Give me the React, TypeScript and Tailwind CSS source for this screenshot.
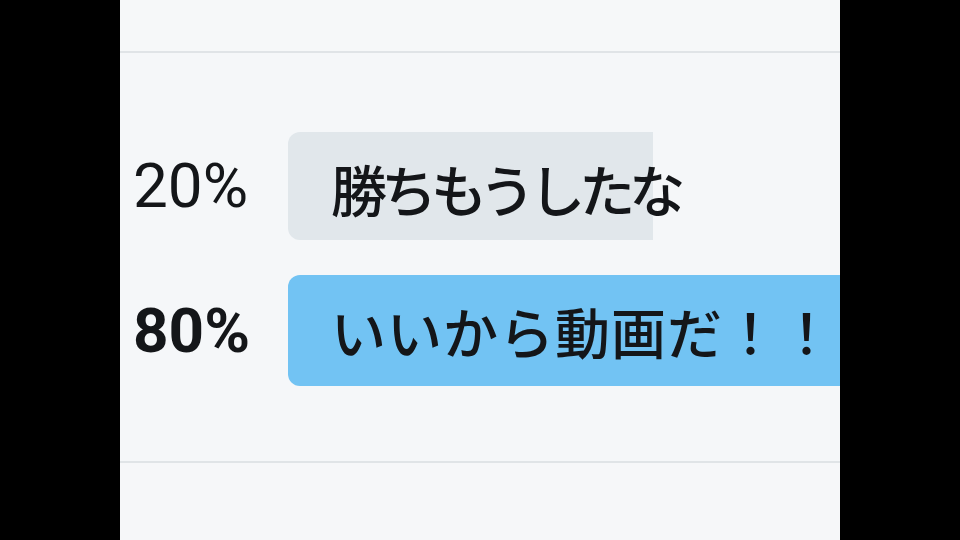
import React from "react";

export default function App() {
  return (
    <div className="w-[960px] h-[540px] bg-black flex justify-center overflow-hidden">
      <div className="w-[720px] h-[540px] flex flex-col bg-[#f5f7f9] overflow-hidden">
        <div className="h-[51px] shrink-0 bg-[#f6f8f9]" />
        <div className="h-[2px] shrink-0 bg-[#e0e4e7]" />
        <div className="h-[408px] shrink-0 flex flex-col pt-[79px] gap-[35px]">
          <div className="flex items-center h-[108px]">
            <div
              className="w-[168px] shrink-0 pl-[13px] text-[62px] text-[#141619] leading-none"
              style={{ fontFamily: "Roboto, 'Noto Sans', sans-serif" }}
            >
              20%
            </div>
            <div className="h-[108px] w-[365px] shrink-0 bg-[#e1e7eb] rounded-l-[12px] flex items-center pl-[43px]">
              <span
                className="text-[56px] font-medium leading-none tracking-[-6px] text-[#141619] whitespace-nowrap pt-[4px]"
                style={{ fontFamily: "'Noto Sans CJK JP', sans-serif" }}
              >
                勝ちもうしたな
              </span>
            </div>
          </div>
          <div className="flex items-center h-[111px]">
            <div
              className="w-[168px] shrink-0 pl-[13px] text-[62px] font-bold text-[#141619] leading-none"
              style={{ fontFamily: "Roboto, 'Noto Sans', sans-serif" }}
            >
              80%
            </div>
            <div className="h-[111px] w-[620px] shrink-0 bg-[#72c3f3] rounded-l-[12px] flex items-center pl-[43px]">
              <span
                className="text-[55px] font-medium leading-none tracking-[1px] text-[#141619] whitespace-nowrap"
                style={{ fontFamily: "'Noto Sans CJK JP', sans-serif" }}
              >
                いいから動画だ！！
              </span>
            </div>
          </div>
        </div>
        <div className="h-[2px] shrink-0 bg-[#e0e4e7]" />
        <div className="flex-1 bg-[#f6f7f9]" />
      </div>
    </div>
  );
}
